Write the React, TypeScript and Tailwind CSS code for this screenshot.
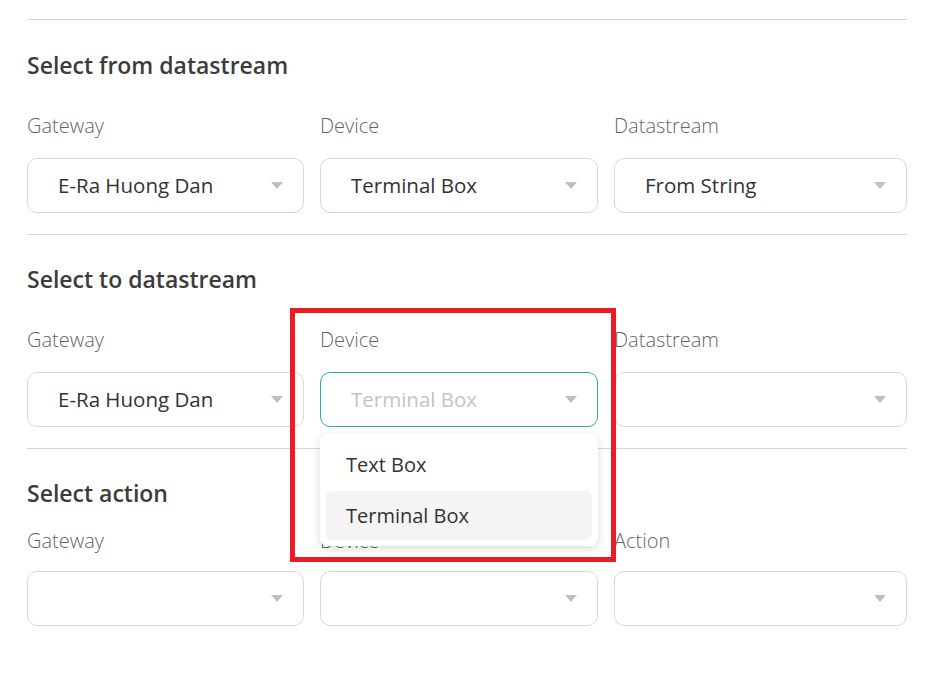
import React from "react";

type Field = {
  label: string;
  value?: string;
  placeholder?: string;
  focused?: boolean;
  menu?: string[];
};

type Section = {
  title: string;
  headGap: string;
  titleGap: string;
  labelGap: string;
  fields: Field[];
};

const sections: Section[] = [
  {
    title: "Select from datastream",
    headGap: "mt-[30px]",
    titleGap: "mt-[34px]",
    labelGap: "mt-[20px]",
    fields: [
      { label: "Gateway", value: "E-Ra Huong Dan" },
      { label: "Device", value: "Terminal Box" },
      { label: "Datastream", value: "From String" },
    ],
  },
  {
    title: "Select to datastream",
    headGap: "mt-[29px]",
    titleGap: "mt-[34px]",
    labelGap: "mt-[20px]",
    fields: [
      { label: "Gateway", value: "E-Ra Huong Dan" },
      {
        label: "Device",
        placeholder: "Terminal Box",
        focused: true,
        menu: ["Text Box", "Terminal Box"],
      },
      { label: "Datastream" },
    ],
  },
  {
    title: "Select action",
    headGap: "mt-[29px]",
    titleGap: "mt-[21px]",
    labelGap: "mt-[18px]",
    fields: [{ label: "Gateway" }, { label: "Device" }, { label: "Action" }],
  },
];

function Caret() {
  return (
    <svg width="12" height="7" viewBox="0 0 12 7" className="shrink-0">
      <path d="M0 0 H12 L6 7 Z" fill="#bfbfbf" />
    </svg>
  );
}

function SelectBox({ field }: { field: Field }) {
  return (
    <div className="relative">
      <div
        className={`flex h-[55px] items-center justify-between rounded-[10px] border bg-white pl-[30px] pr-[20px] ${
          field.focused ? "border-[#35a8a8]" : "border-[#d9d9d9]"
        }`}
      >
        <span
          className={`text-[20.5px] ${field.value ? "text-[#333333]" : "text-[#c4c4c4]"}`}
        >
          {field.value ?? field.placeholder ?? ""}
        </span>
        <Caret />
      </div>
      {field.menu && (
        <div className="absolute left-0 right-0 top-full z-10 mt-[7px] flex flex-col gap-[2px] rounded-[8px] bg-white p-[6px] shadow-[0_3px_10px_rgba(0,0,0,0.14)]">
          {field.menu.map((item, i) => (
            <div
              key={item}
              className={`flex h-[49px] items-center rounded-[6px] px-[20px] text-[20px] text-[#333333] ${
                i === field.menu!.length - 1 ? "bg-[#f4f4f4]" : ""
              }`}
            >
              {item}
            </div>
          ))}
        </div>
      )}
    </div>
  );
}

export default function App() {
  return (
    <div
      className="relative h-[677px] w-[933px] overflow-hidden bg-white pl-[27px] pr-[26px] pt-[19px] text-[#333333]"
      style={{ fontFamily: '"Open Sans", "Noto Sans", sans-serif' }}
    >
      {sections.map((s) => (
        <div key={s.title}>
          <div className="h-px bg-[#d6d6d6]" />
          <h2 className={`text-[23px] font-semibold leading-[30px] text-[#3c3c3c] ${s.headGap}`}>
            {s.title}
          </h2>
          <div className={`grid grid-cols-[277px_278px_1fr] gap-x-[16px] ${s.titleGap}`}>
            {s.fields.map((f) => (
              <div key={f.label} className={f.menu ? "relative z-10" : ""}>
                <div className="text-[20px] font-light leading-[24px] text-[#666666]">
                  {f.label}
                </div>
                <div className={s.labelGap}>
                  <SelectBox field={f} />
                </div>
              </div>
            ))}
          </div>
          <div className="h-[21px]" />
        </div>
      ))}

      {/* annotation frame */}
      <div className="pointer-events-none absolute left-[290px] top-[308px] z-20 h-[254px] w-[326px] border-[5px] border-[#ed1c24]" />
    </div>
  );
}
